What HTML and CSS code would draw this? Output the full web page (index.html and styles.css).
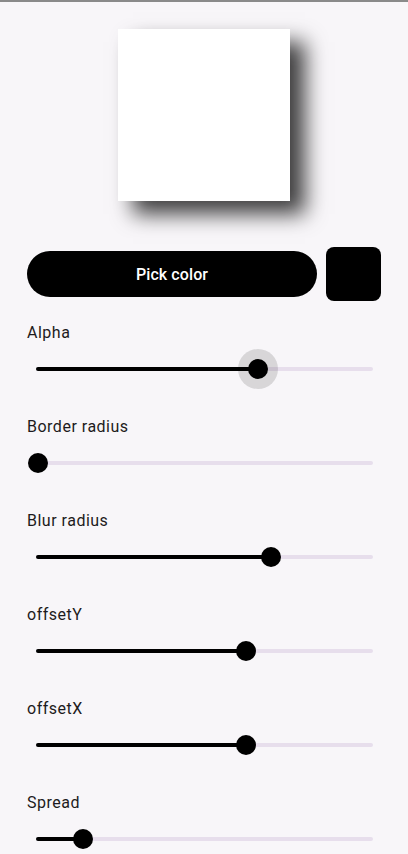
FILE: index.html
```html
<!DOCTYPE html>
<html>
<head>
<meta charset="utf-8">
<link rel="stylesheet" href="styles.css">
</head>
<body>
<div class="topline"></div>
<main class="page">
  <div class="preview-wrap">
    <div class="preview"></div>
  </div>
  <div class="actions">
    <button class="pick">Pick color</button>
    <div class="swatch"></div>
  </div>
  <section class="control">
    <div class="label">Alpha</div>
    <div class="slider">
      <div class="track">
        <div class="active" style="width:65.8%"></div>
        <div class="thumb focused" style="left:65.8%"></div>
      </div>
    </div>
  </section>
  <section class="control">
    <div class="label">Border radius</div>
    <div class="slider">
      <div class="track">
        <div class="active" style="width:0.6%"></div>
        <div class="thumb" style="left:0.6%"></div>
      </div>
    </div>
  </section>
  <section class="control">
    <div class="label">Blur radius</div>
    <div class="slider">
      <div class="track">
        <div class="active" style="width:69.6%"></div>
        <div class="thumb" style="left:69.6%"></div>
      </div>
    </div>
  </section>
  <section class="control">
    <div class="label">offsetY</div>
    <div class="slider">
      <div class="track">
        <div class="active" style="width:62.2%"></div>
        <div class="thumb" style="left:62.2%"></div>
      </div>
    </div>
  </section>
  <section class="control">
    <div class="label">offsetX</div>
    <div class="slider">
      <div class="track">
        <div class="active" style="width:62.2%"></div>
        <div class="thumb" style="left:62.2%"></div>
      </div>
    </div>
  </section>
  <section class="control">
    <div class="label">Spread</div>
    <div class="slider">
      <div class="track">
        <div class="active" style="width:14%"></div>
        <div class="thumb" style="left:14%"></div>
      </div>
    </div>
  </section>
</main>
</body>
</html>
```
FILE: styles.css
```css
html, body {
  margin: 0;
  padding: 0;
  background: #f8f6f9;
  font-family: Roboto, "Liberation Sans", sans-serif;
  color: #1d1b20;
  overflow: hidden;
  height: 854px;
}

.topline {
  height: 2px;
  background: #8a8a8a;
}

.page {
  display: flex;
  flex-direction: column;
}

.preview-wrap {
  display: flex;
  justify-content: center;
  padding-top: 27px;
}

.preview {
  width: 172px;
  height: 172px;
  background: #ffffff;
  box-shadow: 15px 13px 20px rgba(0, 0, 0, 0.75);
}

.actions {
  display: flex;
  align-items: center;
  gap: 9px;
  padding: 0 27px;
  margin-top: 46px;
}

.pick {
  flex: 1;
  height: 46px;
  border: none;
  border-radius: 23px;
  background: #000000;
  color: #ffffff;
  font-family: Roboto, "Liberation Sans", sans-serif;
  font-size: 16px;
  font-weight: 500;
  letter-spacing: 0.1px;
  padding: 0;
}

.swatch {
  width: 55px;
  height: 54px;
  border-radius: 8px;
  background: #000000;
}

.control {
  display: flex;
  flex-direction: column;
  padding: 0 26px 0 27px;
  margin-bottom: 22px;
}

.actions + .control {
  margin-top: 20px;
}

.label {
  font-size: 16px;
  line-height: 24px;
  letter-spacing: 0.5px;
}

.slider {
  height: 48px;
  display: flex;
  align-items: center;
  padding: 0 9px;
}

.track {
  position: relative;
  flex: 1;
  height: 4px;
  border-radius: 2px;
  background: #e7deec;
}

.active {
  height: 4px;
  border-radius: 2px;
  background: #000000;
}

.thumb {
  position: absolute;
  top: 50%;
  width: 20px;
  height: 20px;
  margin: -10px 0 0 -10px;
  border-radius: 50%;
  background: #000000;
}

.thumb.focused {
  box-shadow: 0 0 0 10px rgba(0, 0, 0, 0.13);
}
```
